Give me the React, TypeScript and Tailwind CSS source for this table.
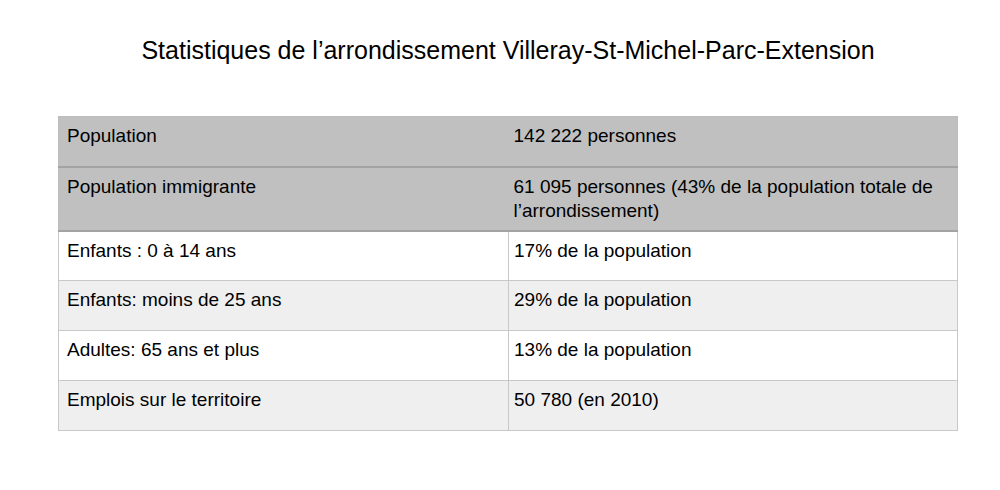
const headRows = [
  { label: "Population", value: "142 222 personnes", h: "h-[50px]" },
  {
    label: "Population immigrante",
    value: "61 095 personnes (43% de la population totale de l’arrondissement)",
    h: "h-[64px]",
  },
];

const rows = [
  { label: "Enfants : 0 à 14 ans", value: "17% de la population", bg: "bg-white" },
  { label: "Enfants: moins de 25 ans", value: "29% de la population", bg: "bg-[#efefef]" },
  { label: "Adultes: 65 ans et plus", value: "13% de la population", bg: "bg-white" },
  { label: "Emplois sur le territoire", value: "50 780 (en 2010)", bg: "bg-[#efefef]" },
];

const App = () => {
  return (
    <div className="w-[1000px] h-[490px] bg-white text-black font-['Liberation_Sans',Arial,sans-serif]">
      <h1 className="pt-[35px] text-center text-[25px] leading-[30px] pl-[16px]">
        Statistiques de l’arrondissement Villeray-St-Michel-Parc-Extension
      </h1>
      <table className="mt-[51px] ml-[58px] w-[900px] border-collapse table-fixed text-[19px] leading-[24px]">
        <tbody>
          {headRows.map((r) => (
            <tr key={r.label} className={`${r.h} bg-[#bfc0bf] border border-[#bcbcbc] border-b-2 border-b-[#a3a3a3]`}>
              <td className="w-[450px] align-top pl-[8px] pt-[7px]">{r.label}</td>
              <td className="align-top pl-[5px] pr-[10px] pt-[7px]">{r.value}</td>
            </tr>
          ))}
          {rows.map((r) => (
            <tr key={r.label} className={`h-[50px] ${r.bg}`}>
              <td className="w-[450px] align-top pl-[8px] pt-[7px] border border-[#c8c8c8]">{r.label}</td>
              <td className="align-top pl-[5px] pr-[10px] pt-[7px] border border-[#c8c8c8]">{r.value}</td>
            </tr>
          ))}
        </tbody>
      </table>
    </div>
  );
};

export default App;
